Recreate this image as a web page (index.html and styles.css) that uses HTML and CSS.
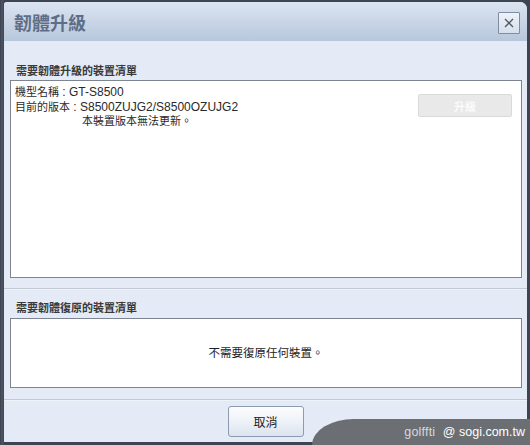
FILE: index.html
```html
<!DOCTYPE html>
<html lang="zh-Hant">
<head>
<meta charset="utf-8">
<title>韌體升級</title>
<link rel="stylesheet" href="styles.css">
</head>
<body>
<div class="dialog">
  <div class="titlebar">
    <h1 class="title">韌體升級</h1>
    <button class="close" aria-label="關閉">
      <svg width="10" height="10" viewBox="0 0 10 10"><path d="M1 1 L9 9 M9 1 L1 9" stroke="#4d5563" stroke-width="1.3" fill="none"/></svg>
    </button>
  </div>
  <div class="content">
    <div class="section-head">需要韌體升級的裝置清單</div>
    <div class="list list-upgrade">
      <div class="info">
        <div class="line"><span class="cjk">機型名稱</span> : GT-S8500</div>
        <div class="line"><span class="cjk">目前的版本</span> : S8500ZUJG2/S8500OZUJG2</div>
        <div class="line note"><span class="cjk">本裝置版本無法更新。</span></div>
      </div>
      <button class="upgrade" disabled>升級</button>
    </div>
    <div class="sep"></div>
    <div class="section-head second">需要韌體復原的裝置清單</div>
    <div class="list list-restore">不需要復原任何裝置。</div>
    <div class="sep"></div>
  </div>
  <div class="footer">
    <button class="cancel">取消</button>
  </div>
</div>
<div class="watermark"><span class="wm-user">golffti</span> <span class="wm-site">@ sogi.com.tw</span></div>
</body>
</html>
```
FILE: styles.css
```css
html, body {
  margin: 0;
  padding: 0;
}
body {
  width: 530px;
  height: 445px;
  overflow: hidden;
  background: linear-gradient(90deg, #3b414d 0, #4f5766 2px, #3e4452 4px);
  font-family: "Liberation Sans", "Noto Sans CJK TC", sans-serif;
  position: relative;
}
.dialog {
  margin: 2px 3px 0 4px;
  width: 523px;
  height: 440px;
  background: #e4ebf6;
  border-radius: 3px 7px 0 0;
  display: flex;
  flex-direction: column;
  overflow: hidden;
}
.titlebar {
  height: 39px;
  flex: none;
  background: linear-gradient(180deg, #dbe4f1 0%, #cbd7e8 45%, #b8c7dc 100%);
  display: flex;
  align-items: center;
  justify-content: space-between;
  padding: 0 7px 0 10px;
}
.title {
  margin: 0;
  font-family: "Noto Sans CJK TC", sans-serif;
  font-size: 18px;
  font-weight: 700;
  color: #5f6e87;
  line-height: 20px;
}
.close {
  width: 22px;
  height: 22px;
  margin-top: 3px;
  padding: 0;
  border: 1px solid #7f8ca1;
  border-radius: 1px;
  background: linear-gradient(180deg, #eef2f8 0%, #d6dfec 100%);
  display: flex;
  align-items: center;
  justify-content: center;
}
.content {
  flex: none;
}
.section-head {
  font-family: "Noto Sans CJK TC", sans-serif;
  font-size: 11px;
  font-weight: 700;
  color: #3a3a3a;
  line-height: 16px;
  padding: 21px 0 2px 12px;
}
.section-head.second {
  padding-top: 9px;
  padding-bottom: 3px;
}
.list {
  margin: 0 5px 0 6px;
  background: #fff;
  border: 1px solid #7c8591;
  box-sizing: border-box;
}
.list-upgrade {
  height: 198px;
  display: flex;
  justify-content: space-between;
  align-items: flex-start;
  padding: 4px 9px 0 4px;
}
.info {
  font-size: 12px;
  line-height: 13.5px;
  color: #2a2a2a;
}
.cjk {
  font-family: "Noto Sans CJK TC", sans-serif;
  font-size: 11px;
}
.line.note {
  padding-left: 67px;
}
.upgrade {
  margin-top: 9px;
  width: 94px;
  height: 23px;
  padding: 0;
  border: 1px solid #dadada;
  border-radius: 2px;
  background: #e9e9e9;
  color: #fbfbfb;
  font-family: "Noto Sans CJK TC", sans-serif;
  font-size: 11px;
  font-weight: 700;
}
.sep {
  margin-top: 10px;
  height: 1px;
  background: #c3cad4;
  border-bottom: 1px solid #eef2f9;
}
.list-restore {
  height: 70px;
  display: flex;
  align-items: center;
  justify-content: center;
  font-family: "Noto Sans CJK TC", sans-serif;
  font-size: 11.5px;
  color: #1e1e1e;
  padding-bottom: 3px;
}
.list-restore + .sep {
  margin-top: 11px;
}
.footer {
  flex: 1;
  display: flex;
  justify-content: center;
  align-items: flex-start;
  padding-top: 5px;
}
.cancel {
  width: 76px;
  height: 31px;
  padding: 0;
  border: 1px solid #8e9ab0;
  border-radius: 3px;
  background: linear-gradient(180deg, #fbfcfe 0%, #eef2f8 50%, #dbe3ee 100%);
  font-family: "Noto Sans CJK TC", sans-serif;
  font-size: 12px;
  color: #222;
}
.watermark {
  position: absolute;
  left: 312px;
  top: 419px;
  width: 218px;
  height: 26px;
  background: #6b6e73;
  border-top-left-radius: 42px 26px;
  box-sizing: border-box;
  padding: 5px 5px 0 0;
  text-align: right;
  font-family: "Liberation Sans", sans-serif;
  font-size: 12.5px;
  line-height: 16px;
  white-space: nowrap;
}
.wm-user {
  color: #d9dadc;
  letter-spacing: 0.2px;
  margin-right: 4px;
}
.wm-site {
  color: #ffffff;
}
```
